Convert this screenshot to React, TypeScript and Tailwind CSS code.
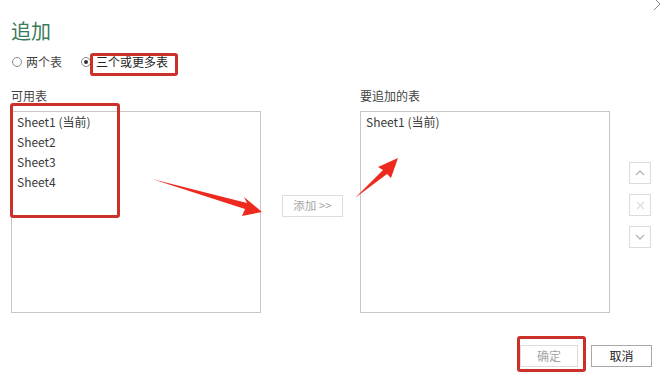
import React from "react";

const font = { fontFamily: '"Noto Sans CJK SC", "Noto Sans", sans-serif' };

function Radio({ checked }: { checked?: boolean }) {
  return (
    <span className="flex h-[10px] w-[10px] items-center justify-center rounded-full border border-[#8a8a8a] bg-white">
      {checked && <span className="h-[4px] w-[4px] rounded-full bg-[#333]" />}
    </span>
  );
}

function SideBtn({ children }: { children: React.ReactNode }) {
  return (
    <div className="flex h-[22px] w-[22px] items-center justify-center border border-[#dcdcdc] bg-white">
      {children}
    </div>
  );
}

export default function App() {
  return (
    <div className="relative h-[381px] w-[665px] overflow-hidden bg-white text-[12px] text-[#3a3a3a]" style={font}>
      {/* close glyph */}
      <svg className="absolute right-[2px] top-[-3px]" width="10" height="14" viewBox="0 0 10 14">
        <path d="M1 1 L7 7 L1 13" stroke="#888" strokeWidth="1" fill="none" />
      </svg>

      <div className="flex flex-col pl-[11px] pt-[17px]">
        <div className="text-[20px] leading-[28px] text-[#3a7a5a]">追加</div>

        <div className="mt-[7px] flex h-[20px] items-center">
          <div className="ml-[1px] flex items-center gap-[4px]">
            <Radio />
            <span className="leading-[20px] text-[#444]">两个表</span>
          </div>
          <div className="ml-[19px] flex items-center gap-[5px]">
            <Radio checked />
            <span className="leading-[20px] text-[#222]">三个或更多表</span>
          </div>
        </div>

        <div className="mt-[14px] flex">
          <div className="flex w-[250px] flex-col">
            <div className="mb-[5px] h-[20px] leading-[20px] text-[#444]">可用表</div>
            <div className="h-[202px] border border-[#c6c6c6] px-[5px] pt-0">
              <div className="leading-[20px]">Sheet1 (当前)</div>
              <div className="leading-[20px]">Sheet2</div>
              <div className="leading-[20px]">Sheet3</div>
              <div className="leading-[20px]">Sheet4</div>
            </div>
          </div>

          <div className="flex w-[99px] items-center justify-center pt-[12px]">
            <div className="ml-[4px] flex h-[22px] w-[61px] items-center justify-center border border-[#dedede] text-[11.5px] text-[#a5a5a5]">
              添加 &gt;&gt;
            </div>
          </div>

          <div className="flex w-[250px] flex-col">
            <div className="mb-[5px] h-[20px] leading-[20px] text-[#444]">要追加的表</div>
            <div className="h-[202px] border border-[#c6c6c6] px-[5px] pt-0">
              <div className="leading-[20px]">Sheet1 (当前)</div>
            </div>
          </div>

          <div className="ml-[19px] flex flex-col gap-[10px] pt-[76px]">
            <SideBtn>
              <svg width="10" height="6" viewBox="0 0 10 6">
                <path d="M1 5 L5 1 L9 5" stroke="#b5b5b5" strokeWidth="1.3" fill="none" />
              </svg>
            </SideBtn>
            <SideBtn>
              <svg width="9" height="9" viewBox="0 0 9 9">
                <path d="M1 1 L8 8 M8 1 L1 8" stroke="#dcdcdc" strokeWidth="1.2" fill="none" />
              </svg>
            </SideBtn>
            <SideBtn>
              <svg width="10" height="6" viewBox="0 0 10 6">
                <path d="M1 1 L5 5 L9 1" stroke="#b5b5b5" strokeWidth="1.3" fill="none" />
              </svg>
            </SideBtn>
          </div>
        </div>

        <div className="mt-[32px] flex justify-end pr-[13px]">
          <div className="flex h-[22px] w-[58px] items-center justify-center border border-[#dcdcdc] text-[#a5a5a5]">确定</div>
          <div className="ml-[13px] flex h-[22px] w-[61px] items-center justify-center border border-[#a8a8a8] text-[#222]">取消</div>
        </div>
      </div>

      {/* annotations */}
      <div className="absolute left-[90px] top-[53px] h-[23px] w-[88px] rounded-[3px] border-[3px] border-[#cc302b]" />
      <div className="absolute left-[10px] top-[103px] h-[115px] w-[110px] rounded-[3px] border-[3px] border-[#cc302b]" />
      <div className="absolute left-[517px] top-[336px] h-[36px] w-[69px] rounded-[3px] border-[3px] border-[#cc302b]" />

      <svg className="absolute left-0 top-0" width="665" height="381" viewBox="0 0 665 381">
        <polygon points="152,179 247,203 244,197 262,212 242,216 245,209" fill="#ee2a1e" />
        <polygon points="355,198 383,170 378,167 398,158 391,178 387,174" fill="#ee2a1e" />
      </svg>
    </div>
  );
}
